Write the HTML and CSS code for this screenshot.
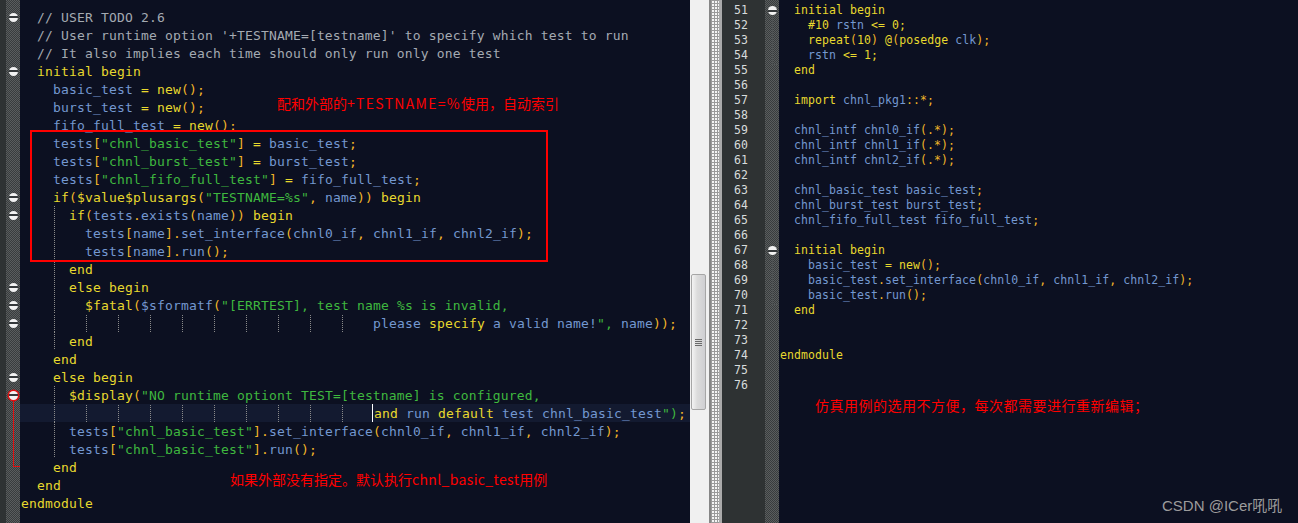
FILE: index.html
```html
<!DOCTYPE html>
<html lang="zh">
<head>
<meta charset="utf-8">
<title>Verilog editor</title>
<link rel="stylesheet" href="styles.css">
</head>
<body>
<div class="app">
  <section class="pane-left">
    <div class="gutter">
      <div class="gr"><i class="fold"></i></div><div class="gr"></div><div class="gr"></div>
      <div class="gr"><i class="fold"></i></div><div class="gr"></div><div class="gr"></div><div class="gr"></div><div class="gr"></div><div class="gr"></div><div class="gr"></div>
      <div class="gr"><i class="fold"></i></div><div class="gr"><i class="fold"></i></div><div class="gr"></div><div class="gr"></div><div class="gr"></div>
      <div class="gr"><i class="fold"></i></div><div class="gr"><i class="fold"></i></div><div class="gr"><i class="fold"></i></div><div class="gr"></div><div class="gr"></div>
      <div class="gr"><i class="fold"></i></div><div class="gr"><i class="fold fold-err"><b class="err-line"></b></i></div>
    </div>
    <div class="code">
<div class="ln c">  // USER TODO 2.6</div>
<div class="ln c">  // User runtime option '+TESTNAME=[testname]' to specify which test to run</div>
<div class="ln c">  // It also implies each time should only run only one test</div>
<div class="ln">  <span class="k">initial begin</span></div>
<div class="ln">    basic_test <span class="k">=</span> <span class="k">new</span><span class="p">();</span></div>
<div class="ln">    burst_test <span class="k">=</span> <span class="k">new</span><span class="p">();</span></div>
<div class="ln">    fifo_full_test <span class="k">=</span> <span class="k">new</span><span class="p">();</span></div>
<div class="ln">    tests<span class="p">[</span><span class="s">"chnl_basic_test"</span><span class="p">]</span> <span class="k">=</span> basic_test<span class="p">;</span></div>
<div class="ln">    tests<span class="p">[</span><span class="s">"chnl_burst_test"</span><span class="p">]</span> <span class="k">=</span> burst_test<span class="p">;</span></div>
<div class="ln">    tests<span class="p">[</span><span class="s">"chnl_fifo_full_test"</span><span class="p">]</span> <span class="k">=</span> fifo_full_test<span class="p">;</span></div>
<div class="ln">    <span class="k">if</span><span class="p">(</span><span class="k">$value$plusargs</span><span class="p">(</span><span class="s">"TESTNAME=%s"</span><span class="p">,</span> name<span class="p">))</span> <span class="k">begin</span></div>
<div class="ln g">      <span class="k">if</span><span class="p">(</span>tests<span class="p">.</span>exists<span class="p">(</span>name<span class="p">))</span> <span class="k">begin</span></div>
<div class="ln g">        tests<span class="p">[</span>name<span class="p">].</span>set_interface<span class="p">(</span>chnl0_if<span class="p">,</span> chnl1_if<span class="p">,</span> chnl2_if<span class="p">);</span></div>
<div class="ln g">        tests<span class="p">[</span>name<span class="p">].</span>run<span class="p">();</span></div>
<div class="ln g">      <span class="k">end</span></div>
<div class="ln g">      <span class="k">else begin</span></div>
<div class="ln g">        <span class="k">$fatal</span><span class="p">(</span>$sformatf<span class="p">(</span><span class="s">"[ERRTEST], test name %s is invalid,</span></div>
<div class="ln"><span class="tabs"></span>please <span class="k">specify</span> a valid name!<span class="s">",</span> name<span class="p">));</span></div>
<div class="ln g">      <span class="k">end</span></div>
<div class="ln">    <span class="k">end</span></div>
<div class="ln">    <span class="k">else begin</span></div>
<div class="ln g">      <span class="k">$display</span><span class="p">(</span><span class="s">"NO runtime optiont TEST=[testname] is configured,</span></div>
<div class="ln cur"><span class="tabs"></span><i class="caret"></i><span class="k">and</span> run <span class="k">default</span> test chnl_basic_test<span class="s">")</span><span class="p">;</span></div>
<div class="ln g">      tests<span class="p">[</span><span class="s">"chnl_basic_test"</span><span class="p">].</span>set_interface<span class="p">(</span>chnl0_if<span class="p">,</span> chnl1_if<span class="p">,</span> chnl2_if<span class="p">);</span></div>
<div class="ln g">      tests<span class="p">[</span><span class="s">"chnl_basic_test"</span><span class="p">].</span>run<span class="p">();</span></div>
<div class="ln">    <span class="k">end</span></div>
<div class="ln">  <span class="k">end</span></div>
<div class="ln"><span class="k">endmodule</span></div>
    </div>
  </section>

  <div class="scrollbar"><div class="thumb"><span class="grip"></span><span class="grip"></span><span class="grip"></span><span class="grip"></span></div></div>
  <div class="splitter"></div>

  <section class="pane-right">
    <div class="nums">
      <div>51</div><div>52</div><div>53</div><div>54</div><div>55</div><div>56</div><div>57</div><div>58</div><div>59</div><div>60</div><div>61</div><div>62</div><div>63</div>
      <div>64</div><div>65</div><div>66</div><div>67</div><div>68</div><div>69</div><div>70</div><div>71</div><div>72</div><div>73</div><div>74</div><div>75</div><div>76</div>
    </div>
    <div class="foldcol">
      <div class="fr"><i class="fold"><b class="range"></b></i></div>
      <div class="fr"></div><div class="fr"></div><div class="fr"></div><div class="fr"></div><div class="fr"></div><div class="fr"></div><div class="fr"></div>
      <div class="fr"></div><div class="fr"></div><div class="fr"></div><div class="fr"></div><div class="fr"></div><div class="fr"></div><div class="fr"></div><div class="fr"></div>
      <div class="fr"><i class="fold"><b class="range"></b></i></div>
    </div>
    <div class="code2">
<div class="l2">  <span class="k">initial begin</span></div>
<div class="l2">    <span class="k">#10</span> rstn <span class="k">&lt;= 0;</span></div>
<div class="l2">    <span class="k">repeat</span><span class="p">(</span><span class="k">10</span><span class="p">)</span> <span class="k">@</span><span class="p">(</span><span class="k">posedge</span> clk<span class="p">);</span></div>
<div class="l2">    rstn <span class="k">&lt;= 1;</span></div>
<div class="l2">  <span class="k">end</span></div>
<div class="l2"></div>
<div class="l2">  <span class="k">import</span> chnl_pkg1<span class="p">::*;</span></div>
<div class="l2"></div>
<div class="l2">  chnl_intf chnl0_if<span class="p">(.*);</span></div>
<div class="l2">  chnl_intf chnl1_if<span class="p">(.*);</span></div>
<div class="l2">  chnl_intf chnl2_if<span class="p">(.*);</span></div>
<div class="l2"></div>
<div class="l2">  chnl_basic_test basic_test<span class="p">;</span></div>
<div class="l2">  chnl_burst_test burst_test<span class="p">;</span></div>
<div class="l2">  chnl_fifo_full_test fifo_full_test<span class="p">;</span></div>
<div class="l2"></div>
<div class="l2">  <span class="k">initial begin</span></div>
<div class="l2">    basic_test <span class="k">=</span> <span class="k">new</span><span class="p">();</span></div>
<div class="l2">    basic_test<span class="p">.</span>set_interface<span class="p">(</span>chnl0_if<span class="p">,</span> chnl1_if<span class="p">,</span> chnl2_if<span class="p">);</span></div>
<div class="l2">    basic_test<span class="p">.</span>run<span class="p">();</span></div>
<div class="l2">  <span class="k">end</span></div>
<div class="l2"></div>
<div class="l2"></div>
<div class="l2"><span class="k">endmodule</span></div>
    </div>
  </section>

  <div class="redbox"></div>
  <div class="note note-a">配和外部的<span class="wide">+TESTNAME=%</span>使用，自动索引</div>
  <div class="note note-b">如果外部没有指定。默认执行<span class="ascii">chnl_basic_test</span>用例</div>
  <div class="note note-c">仿真用例的选用不方便，每次都需要进行重新编辑；</div>
  <div class="watermark">CSDN @ICer吼吼</div>
</div>
</body>
</html>
```
FILE: styles.css
```css
* { box-sizing: border-box; }
html, body { margin: 0; padding: 0; background: #0c1021; }
.app {
  position: relative;
  display: flex;
  width: 1298px;
  height: 523px;
  overflow: hidden;
  background: #0c1021;
}

/* left editor */
.pane-left { display: flex; width: 690px; flex: none; }
.gutter {
  width: 20px;
  flex: none;
  padding-top: 8px;
  border-left: 6px solid #2e3233;
  background: repeating-conic-gradient(#383c3d 0 25%, #5a5d5e 0 50%) 0 0 / 2px 2px;
}
.gr { height: 18px; display: flex; align-items: center; padding-left: 3px; }
.code { flex: 1; padding-top: 8px; min-width: 0; }
.ln {
  height: 18px;
  padding: 1px 0 0 1px;
  white-space: pre;
  font: 13px/18px "DejaVu Sans Mono", monospace;
  letter-spacing: 0.17px;
  color: #7498d0;
}
.ln.c { color: #a4aab2; }
.ln.g { background: linear-gradient(#8a8a8a 50%, transparent 50%) 34px 0 / 1px 2px repeat-y; }
.ln.cur { background: #131a30; }
.k { color: #e8d82e; }
.s { color: #3fb83f; }
.p { color: #f2b628; }

.tabs {
  display: inline-block;
  width: 319px;
  height: 18px;
  margin: -1px 0 -1px 33px;
  vertical-align: top;
  background-image:
    repeating-linear-gradient(#0c1021 0 1px, transparent 1px 2px),
    linear-gradient(90deg, #8a8a8a 1px, transparent 1px);
  background-size: auto, 32px 100%;
}
.cur .tabs {
  background-image:
    repeating-linear-gradient(#131a30 0 1px, transparent 1px 2px),
    linear-gradient(90deg, #8a8a8a 1px, transparent 1px);
}
.caret {
  display: inline-block;
  width: 0;
  height: 18px;
  margin: -1px 1px -1px -1px;
  vertical-align: top;
  border-left: 1px solid #fff;
}

/* fold markers */
.fold {
  position: relative;
  display: flex;
  align-items: center;
  justify-content: center;
  width: 9px;
  height: 9px;
  border-radius: 50%;
  background: #f2f2f2;
}
.fold::after { content: ""; width: 9px; height: 2px; background: #34383a; }
.fold-err { box-shadow: 0 0 0 1.5px #e01010; }
.err-line {
  position: absolute;
  left: 4px;
  top: 10px;
  width: 7px;
  height: 66px;
  border-left: 1px solid #e01010;
  border-bottom: 1px solid #e01010;
}

/* scrollbar and splitter */
.scrollbar {
  width: 19px;
  flex: none;
  padding: 274px 3px 0 1px;
  background: #f0f0f0;
}
.thumb {
  display: flex;
  flex-direction: column;
  align-items: center;
  justify-content: center;
  gap: 1px;
  height: 136px;
  border: 1px solid #a6a6a6;
  border-radius: 2px;
  background: linear-gradient(90deg, #f4f4f4, #dcdcdc 40%, #cfcfd2);
}
.grip { width: 7px; height: 1px; background: #6a6a6a; }
.splitter {
  width: 13px;
  flex: none;
  border-left: 2px solid #868686;
  border-right: 3px solid #aaa;
  background-color: #f4f4f4;
  background-image:
    linear-gradient(90deg, #9a9a9a 1px, transparent 1px),
    linear-gradient(#9a9a9a 1px, transparent 1px);
  background-size: 3px 3px;
}

/* right editor */
.pane-right { display: flex; flex: 1; min-width: 0; }
.nums {
  width: 43px;
  flex: none;
  padding: 3px 0 0 12px;
  background: #2e3233;
  font: 11.5px/15px "DejaVu Sans Mono", monospace;
  letter-spacing: 0.08px;
  color: #d8dcdc;
}
.foldcol {
  width: 14px;
  flex: none;
  padding: 3px 0 0 3px;
  background: repeating-conic-gradient(#383c3d 0 25%, #5a5d5e 0 50%) 0 0 / 2px 2px;
}
.fr { height: 15px; display: flex; align-items: center; }
.range {
  position: absolute;
  left: 4px;
  top: 9px;
  width: 5px;
  height: 50px;
  border-left: 1px solid #4e5253;
  border-bottom: 1px solid #4e5253;
}
.code2 { flex: 1; padding-top: 3px; min-width: 0; }
.l2 {
  height: 15px;
  padding-left: 1px;
  white-space: pre;
  font: 11.5px/15px "DejaVu Sans Mono", monospace;
  letter-spacing: 0.08px;
  color: #7498d0;
}

/* annotations */
.redbox {
  position: absolute;
  left: 30px;
  top: 130px;
  width: 518px;
  height: 132px;
  border: 2px solid #f00;
}
.note {
  position: absolute;
  font: 14px/20px "Noto Sans CJK SC", "Noto Sans", sans-serif;
  color: #f00;
  white-space: nowrap;
}
.note-a { left: 277px; top: 93px; }
.wide { letter-spacing: 1.3px; }
.ascii { letter-spacing: 0.35px; }
.note-b { left: 230px; top: 469px; }
.note-c { left: 815px; top: 395px; letter-spacing: 0.5px; }
.watermark {
  position: absolute;
  left: 1162px;
  top: 496px;
  font: 15px/20px "Liberation Sans", "Noto Sans CJK SC", sans-serif;
  color: #9c9c9c;
  white-space: nowrap;
}
```
